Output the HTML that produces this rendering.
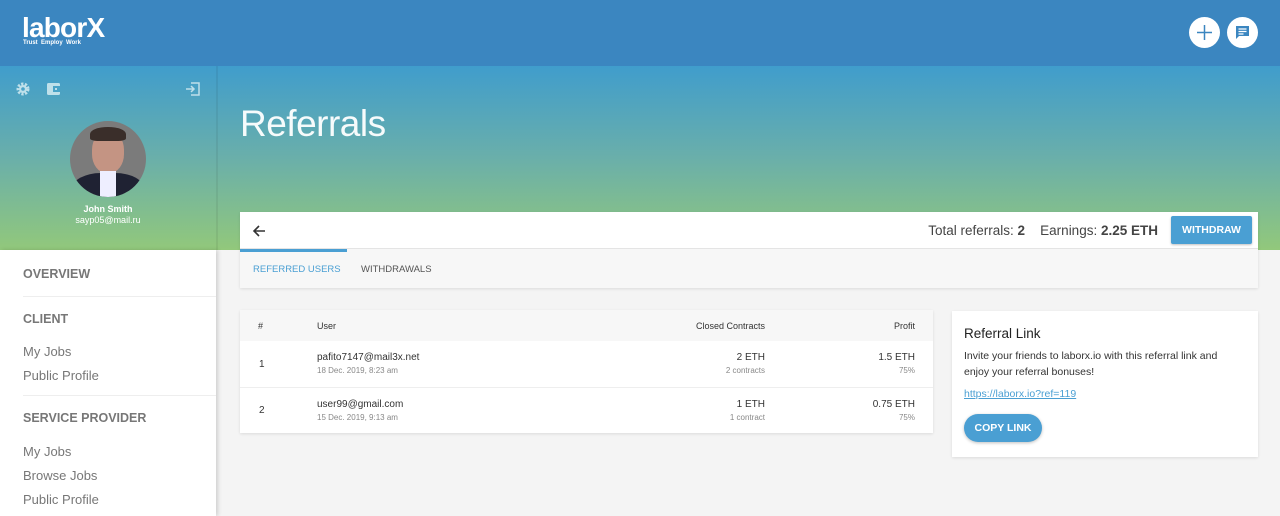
<!DOCTYPE html>
<html><head><meta charset="utf-8"><style>
*{box-sizing:border-box;margin:0;padding:0}
body{width:1280px;height:516px;overflow:hidden;background:#f4f4f4;font-family:"Liberation Sans",Arial,sans-serif;position:relative}
.top{position:absolute;left:0;top:0;width:1280px;height:66px;background:#3b86c0}
.grad{position:absolute;left:0;top:66px;width:1280px;height:184px;background:linear-gradient(#409dcc,#6aafaa 50%,#92c87b)}
.side{position:absolute;left:0;top:250px;width:216px;height:266px;background:#fff;box-shadow:2px 0 4px rgba(0,0,0,.15)}
.sideline{position:absolute;left:216px;top:66px;width:2px;height:184px;background:rgba(0,0,0,.06)}
.abs{position:absolute}
.menu div{position:absolute;left:23px;font-size:13px;color:#777}
.menu .h{font-weight:bold;font-size:12.5px;color:#777}
.hr{position:absolute;left:23px;width:193px;height:1px;background:#eee}
.card{position:absolute;background:#fff;box-shadow:0 1px 3px rgba(0,0,0,.1)}
.t{position:absolute;font-size:10px;color:#333}
.s{position:absolute;font-size:8px;color:#888}
.r{text-align:right}
</style></head><body>
<div class="top"></div>
<div class="grad"></div>
<div class="sideline"></div>
<div class="abs" style="left:22px;top:13px;color:#fff;font-size:28px;font-weight:bold;letter-spacing:-0.8px;line-height:30px">laborX</div>
<div class="abs" style="left:23px;top:40px;color:#fff;font-size:6px;font-weight:bold">Trust &nbsp;Employ &nbsp;Work</div>
<div class="abs" style="left:1189px;top:17px;width:31px;height:31px;border-radius:50%;background:#fff"><svg width="31" height="31"><path d="M15.5 8v15M8 15.5h15" stroke="#3b86c0" stroke-width="1.5"/></svg></div>
<div class="abs" style="left:1227px;top:17px;width:31px;height:31px;border-radius:50%;background:#fff"><svg width="31" height="31"><path d="M9 9h13v10h-10l-3 3z" fill="#3b86c0"/><path d="M11.5 12h8M11.5 14.5h8M11.5 17h5" stroke="#fff" stroke-width="1.2"/></svg></div>
<svg class="abs" style="left:15px;top:81px" width="16" height="16"><circle cx="8" cy="8" r="5" fill="none" stroke="#bfe0ea" stroke-width="3" stroke-dasharray="2.2 1.4"/><circle cx="8" cy="8" r="4" fill="#bfe0ea"/><circle cx="8" cy="8" r="1.8" fill="#4aa3c7"/></svg>
<svg class="abs" style="left:46px;top:81px" width="16" height="16"><rect x="1" y="2" width="13" height="12" rx="1.5" fill="#bfe0ea"/><rect x="7" y="5" width="7" height="6" fill="#4aa3c7"/><rect x="9" y="7" width="2" height="2" fill="#bfe0ea"/></svg>
<svg class="abs" style="left:185px;top:81px" width="16" height="16"><path d="M6 2h8v12H6" fill="none" stroke="#bfe0ea" stroke-width="1.5"/><path d="M1 8h8M6 5l3 3-3 3" fill="none" stroke="#bfe0ea" stroke-width="1.5"/></svg>
<div class="abs" style="left:70px;top:121px;width:76px;height:76px;border-radius:50%;overflow:hidden;background:#7b7b7b">
<div class="abs" style="left:22px;top:10px;width:32px;height:42px;border-radius:45%;background:#c49483"></div>
<div class="abs" style="left:20px;top:6px;width:36px;height:14px;border-radius:50% 50% 20% 20%;background:#3a2e2a"></div>
<div class="abs" style="left:2px;top:52px;width:72px;height:40px;border-radius:40% 40% 0 0;background:#1f2233"></div>
<div class="abs" style="left:30px;top:50px;width:16px;height:26px;background:#eef"></div>
</div>
<div class="abs" style="left:0;width:216px;top:204px;text-align:center;color:#fff;font-size:9px;font-weight:bold">John Smith</div>
<div class="abs" style="left:0;width:216px;top:215px;text-align:center;color:#fff;font-size:9px">sayp05@mail.ru</div>
<div class="side menu">
<div class="h" style="top:17px">OVERVIEW</div>
<div class="hr" style="top:46px;left:23px"></div>
<div class="h" style="top:62px">CLIENT</div>
<div style="top:94px">My Jobs</div>
<div style="top:118px">Public Profile</div>
<div class="hr" style="top:145px"></div>
<div class="h" style="top:161px">SERVICE PROVIDER</div>
<div style="top:194px">My Jobs</div>
<div style="top:218px">Browse Jobs</div>
<div style="top:242px">Public Profile</div>
</div>
<div class="abs" style="left:240px;top:103px;color:rgba(255,255,255,.95);font-size:37px;font-weight:normal;letter-spacing:-0.5px">Referrals</div>
<div class="card" style="left:240px;top:212px;width:1018px;height:76px;background:#f7f7f7">
<div class="abs" style="left:0;top:0;width:1018px;height:37px;background:#fff;border-bottom:1px solid #e4e4e4"></div>
<svg class="abs" style="left:11px;top:11px" width="16" height="16"><path d="M14 8H3M8 3L3 8l5 5" fill="none" stroke="#333" stroke-width="1.6"/></svg>
<div class="abs" style="right:233px;top:11px;font-size:13.5px;color:#444">Total referrals: <b>2</b></div>
<div class="abs" style="right:100px;top:11px;font-size:13.5px;color:#444">Earnings: <b>2.25 ETH</b></div>
<div class="abs" style="left:931px;top:4px;width:81px;height:28px;background:#4a9fd3;color:#fff;font-size:10.5px;font-weight:bold;text-align:center;line-height:28px;border-radius:2px;box-shadow:0 1px 2px rgba(0,0,0,.25)">WITHDRAW</div>
<div class="abs" style="left:0;top:37px;width:107px;height:3px;background:#4a9fd3"></div>
<div class="abs" style="left:13px;top:52px;font-size:9.5px;color:#4a9fd3">REFERRED USERS</div>
<div class="abs" style="left:121px;top:52px;font-size:9.5px;color:#555">WITHDRAWALS</div>
</div>
<div class="card" style="left:240px;top:310px;width:693px;height:123px">
<div class="abs" style="left:0;top:0;width:693px;height:31px;background:#f7f7f7"></div>
<div class="t" style="left:18px;top:11px;font-size:9px">#</div>
<div class="t" style="left:77px;top:11px;font-size:9px">User</div>
<div class="t r" style="right:168px;top:11px;font-size:9px">Closed Contracts</div>
<div class="t r" style="right:18px;top:11px;font-size:9px">Profit</div>
<div class="t" style="left:19px;top:49px">1</div>
<div class="t" style="left:77px;top:42px">pafito7147@mail3x.net</div>
<div class="s" style="left:77px;top:56px">18 Dec. 2019, 8:23 am</div>
<div class="t r" style="right:168px;top:42px">2 ETH</div>
<div class="s r" style="right:168px;top:56px">2 contracts</div>
<div class="t r" style="right:18px;top:42px">1.5 ETH</div>
<div class="s r" style="right:18px;top:56px">75%</div>
<div class="abs" style="left:0;top:77px;width:693px;height:1px;background:#eee"></div>
<div class="t" style="left:19px;top:95px">2</div>
<div class="t" style="left:77px;top:89px">user99@gmail.com</div>
<div class="s" style="left:77px;top:103px">15 Dec. 2019, 9:13 am</div>
<div class="t r" style="right:168px;top:89px">1 ETH</div>
<div class="s r" style="right:168px;top:103px">1 contract</div>
<div class="t r" style="right:18px;top:89px">0.75 ETH</div>
<div class="s r" style="right:18px;top:103px">75%</div>
</div>
<div class="card" style="left:952px;top:311px;width:306px;height:146px">
<div class="abs" style="left:12px;top:15px;font-size:13.5px;color:#222">Referral Link</div>
<div class="abs" style="left:12px;top:37px;width:275px;font-size:10.5px;color:#333;line-height:16px">Invite your friends to laborx.io with this referral link and enjoy your referral bonuses!</div>
<div class="abs" style="left:12px;top:77px;font-size:10.5px;color:#4a9fd3;text-decoration:underline">https://laborx.io?ref=119</div>
<div class="abs" style="left:12px;top:103px;width:78px;height:28px;border-radius:14px;background:#4a9fd3;color:#fff;font-size:10.5px;font-weight:bold;text-align:center;line-height:28px;box-shadow:0 1px 3px rgba(0,0,0,.25)">COPY LINK</div>
</div>
</body></html>
